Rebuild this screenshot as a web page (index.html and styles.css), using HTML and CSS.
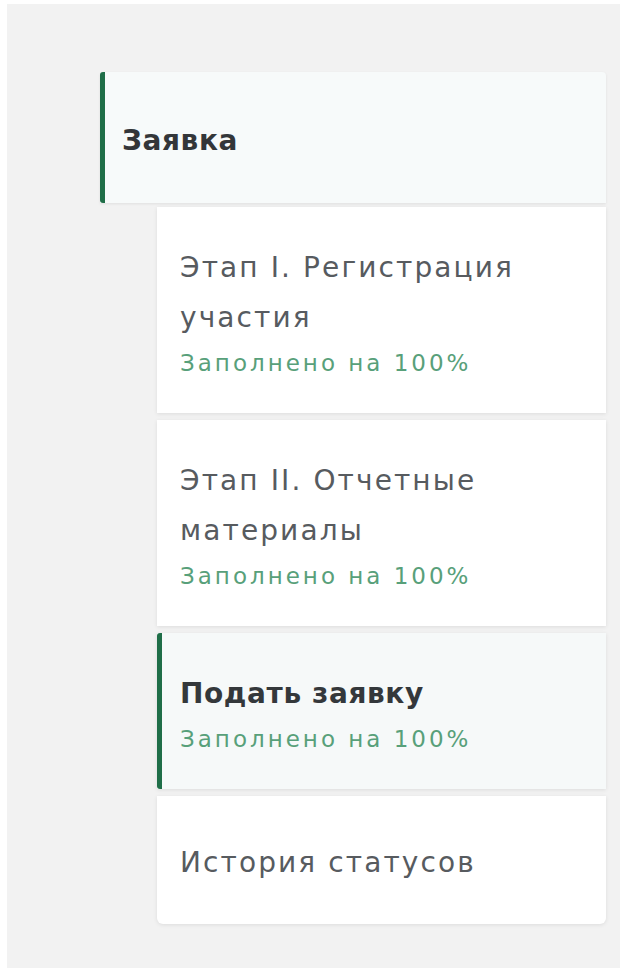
FILE: index.html
```html
<!DOCTYPE html>
<html lang="ru">
<head>
<meta charset="utf-8">
<title>Заявка</title>
<link rel="stylesheet" href="styles.css">
</head>
<body>
<div class="panel">
  <nav class="menu">
    <div class="menu-head is-active">Заявка</div>
    <ul class="menu-list">
      <li class="menu-item">
        <span class="menu-title">Этап I. Регистрация участия</span>
        <span class="menu-progress">Заполнено на 100%</span>
      </li>
      <li class="menu-item">
        <span class="menu-title">Этап II. Отчетные материалы</span>
        <span class="menu-progress">Заполнено на 100%</span>
      </li>
      <li class="menu-item is-active">
        <span class="menu-title">Подать заявку</span>
        <span class="menu-progress">Заполнено на 100%</span>
      </li>
      <li class="menu-item menu-item--single">
        <span class="menu-title">История статусов</span>
      </li>
    </ul>
  </nav>
</div>
</body>
</html>
```

FILE: styles.css
```css
html, body {
  margin: 0;
  padding: 0;
  background: #ffffff;
  height: 100%;
}

body {
  font-family: "DejaVu Sans", "Noto Sans", sans-serif;
}

.panel {
  margin: 4px 0 0 7px;
  min-height: 964px;
  background: #f2f2f2;
  padding: 68px 14px 0 93px;
  box-sizing: border-box;
}

.menu {
  display: flex;
  flex-direction: column;
}

.menu-head {
  position: relative;
  height: 131px;
  display: flex;
  align-items: center;
  padding: 6px 0 0 22px;
  background: #f7fafa;
  border-radius: 4px 4px 0 0;
  box-shadow: 0 1px 3px rgba(0, 0, 0, 0.08);
  font-size: 28px;
  letter-spacing: 0.6px;
  font-weight: 700;
  color: #333639;
  box-sizing: border-box;
}

.is-active::before {
  content: "";
  position: absolute;
  left: 0;
  top: 0;
  bottom: 0;
  width: 5px;
  background: #1f6e48;
  border-radius: 3px 0 0 3px;
}

.menu-list {
  list-style: none;
  margin: 4px 0 0 57px;
  padding: 0;
  display: flex;
  flex-direction: column;
  gap: 7px;
}

.menu-item {
  position: relative;
  display: flex;
  flex-direction: column;
  padding: 36px 24px 34px 23px;
  background: #ffffff;
  box-shadow: 0 1px 4px rgba(0, 0, 0, 0.09);
}

.menu-item.is-active {
  background: #f6f9f9;
}

.menu-item:last-child {
  border-radius: 0 0 6px 6px;
}

.menu-item--single {
  padding-top: 42px;
  padding-bottom: 36px;
}

.menu-title {
  font-size: 28px;
  line-height: 50px;
  letter-spacing: 2.1px;
  color: #575b5f;
}

.is-active .menu-title {
  font-weight: 700;
  letter-spacing: 0.6px;
  color: #34383b;
}

.menu-progress {
  font-size: 23px;
  line-height: 32px;
  letter-spacing: 3px;
  margin-top: 4px;
  color: #58a07a;
}
```
